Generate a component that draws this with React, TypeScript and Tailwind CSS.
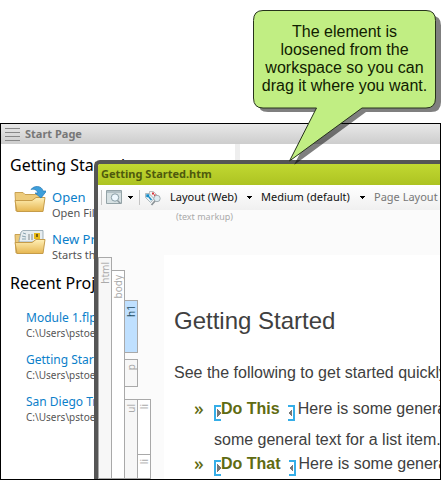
import type { ReactNode } from "react";

const uiFont = "font-['Noto_Sans','Open_Sans',sans-serif]";
const docFont = "font-['Liberation_Sans',Arial,sans-serif]";

function Caret() {
  return (
    <svg className="h-[3px] w-[5px] shrink-0" viewBox="0 0 5 3" shapeRendering="crispEdges" aria-hidden="true">
      <path d="M0 0h5v1h-1v1h-1v1h-1v-1h-1v-1h-1z" fill="#000" />
    </svg>
  );
}

function FolderIcon({ filled = false }: { filled?: boolean }) {
  const id = filled ? "folder-files" : "folder-open";
  return (
    <svg className="h-7 w-8 shrink-0" viewBox="0 0 32 28" aria-hidden="true">
      <defs>
        <linearGradient id={id} x1="0" y1="0" x2="0" y2="1">
          <stop offset="0" stopColor="#fff0b8" />
          <stop offset="1" stopColor="#e6b650" />
        </linearGradient>
      </defs>
      <path d="M1 6.500h8l2 2h16V25H2z" fill="#edcb7b" stroke="#c9a253" />
      {filled && (
        <g>
          <path d="M5 13l2-9 2-1.500h20V14H5z" fill="#e7edf0" stroke="#8ba0aa" strokeWidth=".8" />
          <path d="M9 5l3 1M8 8l4 1M8 11h4" stroke="#88a4b0" />
          <path d="M14 6h2v6h-2zM17 6h2v6h-2z" fill="#b5bcbe" />
          <path d="M20 5h6v6h-6z" fill="#e7b916" />
          <path d="M22 6h2v3h-2z" fill="#785b16" />
        </g>
      )}
      <path d="M1 14.500h17l4-3h9l-2 14H3z" fill={`url(#${id})`} stroke="#c69c49" strokeLinejoin="round" />
      {!filled && (
        <path
          d="M17 3.500C20-1 28-.500 29 5H32.500l-5.500 7-6-5h3c-1-3-4-4.500-7-3.500z"
          fill="#3d9fdb"
          stroke="#2778b5"
          strokeWidth=".7"
        />
      )}
    </svg>
  );
}

function StartItem({ title, detail, icon }: { title: string; detail: string; icon: ReactNode }) {
  return (
    <li className="flex h-[42px] gap-[6px]">
      {icon}
      <div className="whitespace-nowrap">
        <a href="#" className="block text-[13px] leading-4 text-[#0b80ca]">{title}</a>
        <p className="text-[11px] leading-[15px] text-[#555]">{detail}</p>
      </div>
    </li>
  );
}

function ProjectItem({ title }: { title: string }) {
  return (
    <li className="h-[42px] whitespace-nowrap">
      <a href="#" className="block text-[12px] leading-4 text-[#0b80ca]">{title}</a>
      <p className="text-[10px] leading-[15px] text-[#555]">C:\Users\pstoecklein\Documents</p>
    </li>
  );
}

function StartPage() {
  return (
    <section className={`${uiFont} h-full`}>
      <header className="flex h-5 items-center gap-[5px] bg-linear-to-b from-[#e8e8e8] to-[#cdcdcd] pl-1">
        <svg className="h-[13px] w-[15px]" viewBox="0 0 15 13" shapeRendering="crispEdges" aria-hidden="true">
          <path d="M0 .5h15M0 4.500h15M0 8.500h15M0 12.500h15" stroke="#888" />
        </svg>
        <h1 className="text-[11px] font-bold text-[#777]">Start Page</h1>
      </header>
      <div className="flex">
        <div className="w-[234px] shrink-0 overflow-hidden pl-[9px]">
          <h2 className="pt-[9px] text-[16px] leading-6 text-black">Getting Started</h2>
          <ul className="mt-3 pl-1">
            <StartItem title="Open" detail="Open Files" icon={<div className="-mt-[3px]"><FolderIcon /></div>} />
            <StartItem title="New Project" detail="Starts the wizard" icon={<div className="-mt-[3px]"><FolderIcon filled /></div>} />
          </ul>
          <h2 className="text-[16px] leading-5 text-black">Recent Projects</h2>
          <ul className="pt-[17px] pl-4">
            <ProjectItem title="Module 1.flprj" />
            <ProjectItem title="Getting Started.flprj" />
            <ProjectItem title="San Diego Training.flprj" />
          </ul>
        </div>
        <div className="h-4 w-[5px] bg-[#eee]" />
      </div>
    </section>
  );
}

function Choice({ label, value, width }: { label: string; value: string; width: string }) {
  return (
    <div className="flex shrink-0 items-center">
      <select aria-label={label} className={`${width} appearance-none bg-transparent text-[11px] text-[#111] outline-none`}>
        <option>{value}</option>
      </select>
      <Caret />
    </div>
  );
}

function Toolbar() {
  return (
    <div className="flex h-[25px] items-center bg-linear-to-b from-white to-[#f0f0f0] pl-[3px] whitespace-nowrap">
      <div className="h-[15px] w-px shrink-0 bg-[#c4c4c4]" />
      <button aria-label="Preview" className="ml-1 flex shrink-0 items-center gap-[6px]">
        <svg className="h-[15px] w-4" viewBox="0 0 16 15" aria-hidden="true">
          <path d="M.5.5h15v13H.500z" fill="#d6e0e2" stroke="#94a3a7" />
          <path d="M1 2h14" stroke="#b2c0c5" strokeWidth="2" />
          <circle cx="9" cy="7.500" r="3.700" fill="#edf7fd" stroke="#879ba3" />
          <path d="M11.500 10.500l3 3" stroke="#8d999f" strokeWidth="1.500" />
        </svg>
        <Caret />
      </button>
      <div className="ml-[6px] h-[15px] w-px shrink-0 bg-[#c4c4c4]" />
      <button aria-label="Show tags" className="ml-[5px] shrink-0">
        <svg className="h-4 w-4" viewBox="0 0 16 16" aria-hidden="true">
          <path d="M4.500 1.500h4l5 5-3 3.500-6-5z" fill="#f3f3f3" stroke="#b0b0b0" strokeWidth=".8" />
          <path d="M7 2.500h2v2H7zM9 4.500h2v2H9z" fill="#d5343c" />
          <path d="M.5 3.500H4l5 5-3.500 4-5-5z" fill="#edf5f8" stroke="#9aa9b0" strokeWidth=".8" />
          <path d="M2 5h1.500v1.500H2zM4 7l2.500 3" fill="none" stroke="#168bc6" strokeWidth="1.500" />
          <circle cx="12" cy="8.500" r="3.200" fill="#dceaf0" stroke="#a3adb2" />
          <path d="M10 11l-3.500 4" stroke="#8c9498" strokeWidth="1.800" />
        </svg>
      </button>
      <div className="ml-[9px] flex items-center gap-[9px]">
        <Choice label="Layout" value="Layout (Web)" width="w-[77px]" />
        <Choice label="Medium" value="Medium (default)" width="w-[99px]" />
        <button className="text-[11px] text-[#777]">Page Layout</button>
      </div>
    </div>
  );
}

function Tag({ name, className }: { name: string; className: string }) {
  return (
    <div className={`${className} flex w-[14px] shrink-0 justify-center border border-[#a9a9a9] pt-1`}>
      <span className="h-fit rotate-180 text-[10px] leading-3 [writing-mode:vertical-rl]">{name}</span>
    </div>
  );
}

function TagBars() {
  return (
    <div className={`${uiFont} flex w-[66px] shrink-0 pt-[47px] text-[#aaa] *:-mr-px`}>
      <Tag name="html" className="bg-[#f7f7f7]" />
      <Tag name="body" className="mt-[13px] bg-white" />
      <div className="mt-[43px] flex flex-col">
        <Tag name="h1" className="h-[53px] bg-[#bfe0ff] text-[#244b61]" />
        <Tag name="p" className="mt-[6px] h-7 bg-[#f7f7f7]" />
        <div className="mt-3 flex flex-1">
          <Tag name="ul" className="bg-[#f7f7f7]" />
          <div className="-ml-px flex flex-col">
            <Tag name="li" className="h-14 bg-white" />
            <Tag name="li" className="-mt-px flex-1 bg-white" />
          </div>
        </div>
      </div>
    </div>
  );
}

function Marker({ end = false }: { end?: boolean }) {
  return (
    <svg className="h-4 w-[7px] shrink-0 translate-y-1" viewBox="0 0 7 16" shapeRendering="crispEdges" aria-hidden="true">
      <path d={end ? "M0 1h6v14H0" : "M7 1H1v14h6"} fill="none" stroke="#35aee8" strokeWidth="2" />
      <path d={end ? "M4 4v8L0 8z" : "M3 4v8l4-4z"} fill="#777" />
    </svg>
  );
}

function Step({ name, children }: { name: string; children: ReactNode }) {
  return (
    <li className="flex">
      <span className={`${uiFont} w-5 shrink-0 text-[18px] leading-[22px] font-medium text-[#5f6b11]`}>»</span>
      <div>
        <p className="flex h-6 items-center">
          <Marker />
          <b className="mr-2 text-[#5f6b11]">{name}</b>
          <Marker end />
          <span className="ml-[3px]">Here is some general</span>
        </p>
        {children}
      </div>
    </li>
  );
}

function FloatingDocument() {
  return (
    <section className="absolute top-[36px] -right-1 bottom-0 left-[93px] flex flex-col overflow-hidden rounded-tl-[6px] border-t-4 border-l-4 border-[#555] bg-[#fbfbfb]">
      <header className={`${uiFont} flex h-[21px] shrink-0 items-center bg-linear-to-b from-[#c1d831] to-[#adc322] pl-[3px]`}>
        <h2 className="text-[11px] font-bold text-[#4e5a0d]">Getting Started.htm</h2>
      </header>
      <div className={`${uiFont} shrink-0`}><Toolbar /></div>
      <div className="flex min-h-0 flex-1">
        <TagBars />
        <div className="flex min-w-0 flex-1 flex-col whitespace-nowrap">
          <p className={`${uiFont} h-[45px] pl-3 text-[9px] leading-[14px] text-[#aaa]`}>(text markup)</p>
          <article className={`${docFont} flex-1 bg-white pl-[10px] text-[16px] text-[#404040]`}>
            <h1 className="pt-[52px] text-[24px] leading-7">Getting Started</h1>
            <p className="mt-[26px] leading-6">See the following to get started quickly:</p>
            <ul className="mt-3 pl-5">
              <Step name="Do This"><p className="mt-[7px] leading-6">some general text for a list item.</p></Step>
              <Step name="Do That">{null}</Step>
            </ul>
          </article>
        </div>
      </div>
    </section>
  );
}

function Callout() {
  return (
    <aside className={`${docFont} relative z-10 mt-[10px] mr-[5px] h-[98px] w-[183px] pt-[13px] text-center text-[16px] leading-[18px] text-[#102000]`}>
      <svg className="absolute top-0 left-0 h-[160px] w-[190px]" viewBox="0 0 190 160" aria-hidden="true">
        <path
          d="M15 5.500H178q10 0 10 10V92q0 10-10 10H113L41 155l27-53H15q-10 0-10-10V15q0-9.500 10-9.500z"
          fill="#000"
          fillOpacity=".5"
        />
        <path
          d="M10 .5H173q9.500 0 9.500 10V88q0 10-9.500 10H109L36.500 151 63.500 98H10Q.5 98 .5 88V10.500Q.5.500 10 .5z"
          fill="#c1ee83"
          stroke="#26321b"
        />
      </svg>
      <p className="relative">
        The element is<br />loosened from the<br />workspace so you can<br />drag it where you want.
      </p>
    </aside>
  );
}

export default function App() {
  return (
    <main className="flex min-h-screen flex-col bg-white">
      <div className="flex h-[123px] shrink-0 justify-end"><Callout /></div>
      <div className="relative flex-1 overflow-hidden border border-black">
        <StartPage />
        <FloatingDocument />
      </div>
    </main>
  );
}
